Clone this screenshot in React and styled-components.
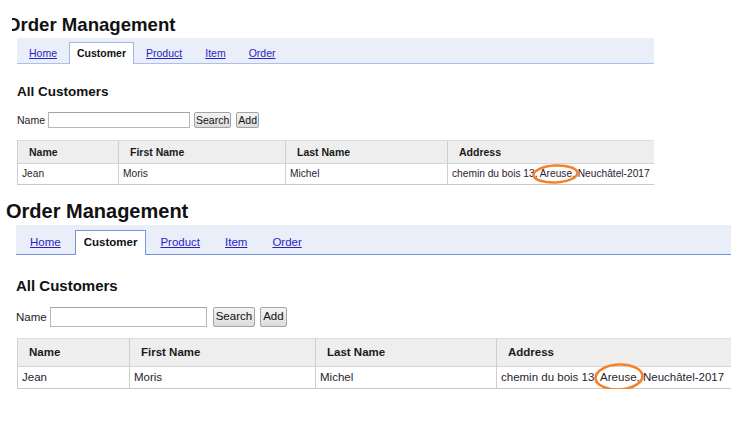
import React from "react";
import styled, { createGlobalStyle } from "styled-components";

// two captures of the same page, the upper one a little smaller and cropped
const small = {
  left: 12,
  width: 642,
  top: 0,
  titleSize: 18.6,
  titleLh: 22,
  titleTop: 14,
  titleIndent: -6,
  inset: 5,
  navInner: 25,
  navLine: "#a9c1ee",
  tabLine: "#9fb8e8",
  tabH: 22,
  tabFont: 10.5,
  tabPad: 10,
  activePad: 7,
  tabGap: 1,
  h2Size: 13.5,
  h2Lh: 16,
  h2Top: 20,
  font: 10.5,
  cellFont: 10.2,
  rowH: 16,
  inputW: 142,
  labelGap: 3,
  searchGap: 4,
  addGap: 5,
  btnPad: 1,
  tableTop: 12,
  tableShift: 0,
  headH: 22,
  cellH: 20,
  cols: [101, 167, 162],
  ring: { w: 47, h: 20, dx: -8 },
};

const large = {
  left: 0,
  width: 731,
  top: 15,
  titleSize: 20,
  titleLh: 23,
  titleTop: 0,
  titleIndent: 6,
  inset: 16,
  navInner: 29,
  navLine: "#7191d7",
  tabLine: "#7396db",
  tabH: 25,
  tabFont: 11.5,
  tabPad: 10,
  activePad: 8,
  tabGap: 3,
  h2Size: 15,
  h2Lh: 18,
  h2Top: 22,
  font: 11.5,
  cellFont: 11.5,
  rowH: 20,
  inputW: 157,
  labelGap: 3,
  searchGap: 6,
  addGap: 5,
  btnPad: 2,
  tableTop: 11,
  tableShift: 1,
  headH: 27,
  cellH: 21,
  cols: [112, 186, 181],
  ring: { w: 50, h: 28, dx: -6 },
};

const tabs = ["Home", "Customer", "Product", "Item", "Order"];

const customers = [
  {
    name: "Jean",
    first: "Moris",
    last: "Michel",
    street: "chemin du bois 13, ",
    city: "Areuse,",
    rest: " Neuchâtel-2017",
  },
];

const Capture = ({ s }) => (
  <Shot $s={s}>
    <Title $s={s}>Order Management</Title>

    {/* tab strip */}
    <Nav $s={s}>
      {tabs.map((t) => (
        <Tab key={t} $s={s} $active={t === "Customer"}>
          {t === "Customer" ? t : <a href="#">{t}</a>}
        </Tab>
      ))}
    </Nav>

    <Heading $s={s}>All Customers</Heading>

    {/* search form */}
    <SearchRow $s={s}>
      <label>Name</label>
      <NameInput $s={s} />
      <Button $s={s} $gap={s.searchGap}>Search</Button>
      <Button $s={s} $gap={s.addGap}>Add</Button>
    </SearchRow>

    <Table $s={s}>
      <colgroup>
        {s.cols.map((w, i) => (
          <col key={i} style={{ width: w }} />
        ))}
        <col />
      </colgroup>
      <thead>
        <tr>
          <Th $s={s}>Name</Th>
          <Th $s={s}>First Name</Th>
          <Th $s={s}>Last Name</Th>
          <Th $s={s}>Address</Th>
        </tr>
      </thead>
      <tbody>
        {customers.map((c) => (
          <tr key={c.name}>
            <Td $s={s}>{c.name}</Td>
            <Td $s={s}>{c.first}</Td>
            <Td $s={s}>{c.last}</Td>
            <Td $s={s}>
              {c.street}
              <Circled>
                {c.city}
                <Ring $r={s.ring} viewBox={`0 0 ${s.ring.w} ${s.ring.h}`}>
                  <ellipse
                    cx={s.ring.w / 2}
                    cy={s.ring.h / 2}
                    rx={s.ring.w / 2 - 1.5}
                    ry={s.ring.h / 2 - 1.5}
                  />
                </Ring>
              </Circled>
              {c.rest}
            </Td>
          </tr>
        ))}
      </tbody>
    </Table>
  </Shot>
);

const App = () => (
  <>
    <GlobalStyle />
    <Capture s={small} />
    <Capture s={large} />
  </>
);

export default App;

const GlobalStyle = createGlobalStyle`
  body {
    margin: 0;
    background: #fff;
    font-family: "Liberation Sans", Arial, sans-serif;
    color: #222;
  }
`;

// one capture of the page
const Shot = styled.section`
  margin: ${(p) => p.$s.top}px 0 0 ${(p) => p.$s.left}px;
  width: ${(p) => p.$s.width}px;
  overflow: hidden;
`;

const Title = styled.h1`
  margin: ${(p) => p.$s.titleTop}px 0 0 ${(p) => p.$s.titleIndent}px;
  font-size: ${(p) => p.$s.titleSize}px;
  line-height: ${(p) => p.$s.titleLh}px;
  font-weight: bold;
  color: #111;
  white-space: nowrap;
`;

const Nav = styled.nav`
  display: flex;
  align-items: flex-end;
  margin: 2px 0 0 ${(p) => p.$s.inset}px;
  height: ${(p) => p.$s.navInner}px;
  background: #eaeef9;
  border-bottom: 1px solid ${(p) => p.$s.navLine};
`;

const Tab = styled.div`
  height: ${(p) => p.$s.tabH}px;
  line-height: ${(p) => p.$s.tabH - 2}px;
  margin: 0 0 -1px ${(p) => p.$s.tabGap}px;
  padding: 0 ${(p) => (p.$active ? p.$s.activePad : p.$s.tabPad)}px;
  box-sizing: border-box;
  border: 1px solid ${(p) => (p.$active ? p.$s.tabLine : "transparent")};
  border-bottom: none;
  background: ${(p) => (p.$active ? "#fff" : "transparent")};
  font-size: ${(p) => p.$s.tabFont}px;
  font-weight: ${(p) => (p.$active ? "bold" : "normal")};
  color: #111;

  a {
    color: #2a1fc4;
    text-decoration: underline;
  }
`;

const Heading = styled.h2`
  margin: ${(p) => p.$s.h2Top}px 0 0 ${(p) => p.$s.inset}px;
  font-size: ${(p) => p.$s.h2Size}px;
  line-height: ${(p) => p.$s.h2Lh}px;
  font-weight: bold;
  color: #111;
`;

const SearchRow = styled.div`
  display: flex;
  align-items: center;
  margin: 12px 0 0 ${(p) => p.$s.inset}px;
  height: ${(p) => p.$s.rowH}px;
  font-size: ${(p) => p.$s.font}px;
  color: #222;

  label {
    margin-right: ${(p) => p.$s.labelGap}px;
  }
`;

const NameInput = styled.input`
  box-sizing: border-box;
  width: ${(p) => p.$s.inputW}px;
  height: ${(p) => p.$s.rowH}px;
  margin: 0;
  padding: 0 2px;
  border: 1px solid #b8b8b8;
  border-top-color: #a4a4a4;
  background: #fff;
`;

const Button = styled.button`
  box-sizing: border-box;
  height: ${(p) => p.$s.rowH}px;
  margin: 0 0 0 ${(p) => p.$gap}px;
  padding: 0 ${(p) => p.$s.btnPad}px;
  border: 1px solid #a3a3a3;
  border-radius: 2px;
  background: linear-gradient(#f4f4f4, #dcdcdc);
  font-family: "Liberation Sans", Arial, sans-serif;
  font-size: ${(p) => p.$s.font}px;
  line-height: 1;
  color: #111;
`;

const Table = styled.table`
  table-layout: fixed;
  width: calc(100% - ${(p) => p.$s.inset + p.$s.tableShift}px);
  margin: ${(p) => p.$s.tableTop}px 0 0 ${(p) => p.$s.inset + p.$s.tableShift}px;
  border-collapse: separate;
  border-spacing: 0;
  border-left: 1px solid #cfcfcf;
  border-top: 1px solid #dcdcdc;
  font-size: ${(p) => p.$s.cellFont}px;
`;

const Th = styled.th`
  padding: 0 0 0 11px;
  height: ${(p) => p.$s.headH}px;
  line-height: ${(p) => p.$s.headH}px;
  text-align: left;
  font-size: ${(p) => p.$s.font}px;
  font-weight: bold;
  color: #1a1a1a;
  background: #eeeeee;
  border-right: 1px solid #cfcfcf;
  border-bottom: 1px solid #d4d4d4;
  white-space: nowrap;

  &:last-child {
    border-right: none;
  }
`;

const Td = styled.td`
  padding: 0 0 0 4px;
  height: ${(p) => p.$s.cellH}px;
  line-height: ${(p) => p.$s.cellH}px;
  color: #2a2230;
  border-right: 1px solid #cfcfcf;
  border-bottom: 1px solid #c8c8c8;
  white-space: nowrap;
  overflow: visible;

  &:last-child {
    border-right: none;
  }
`;

// the hand-drawn orange annotation around the town name
const Circled = styled.span`
  position: relative;
`;

const Ring = styled.svg`
  position: absolute;
  left: ${(p) => p.$r.dx}px;
  top: 50%;
  width: ${(p) => p.$r.w}px;
  height: ${(p) => p.$r.h}px;
  margin-top: ${(p) => -p.$r.h / 2}px;
  transform: rotate(-3deg);
  overflow: visible;

  ellipse {
    fill: none;
    stroke: #f5822a;
    stroke-width: 2.6;
  }
`;
